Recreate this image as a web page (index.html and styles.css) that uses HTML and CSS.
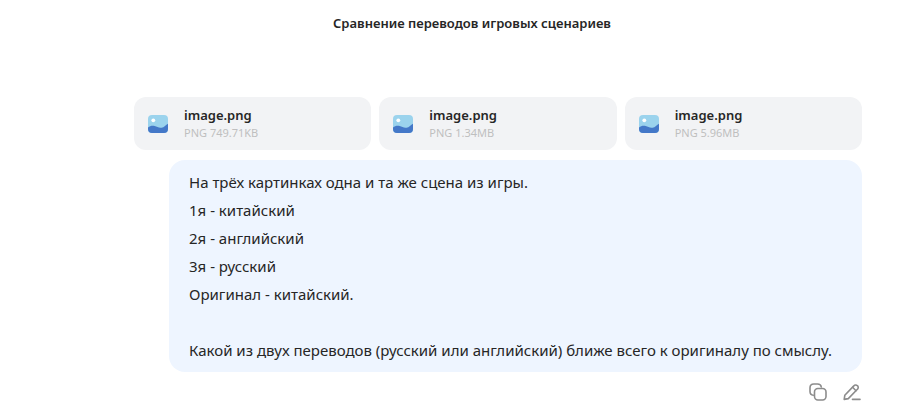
FILE: index.html
```
<!DOCTYPE html>
<html lang="ru">
<head>
    <meta charset="UTF-8">
    <meta name="viewport" content="width=device-width, initial-scale=1.0">
    <title>Сравнение переводов игровых сценариев</title>
    <link rel="stylesheet" href="styles.css">
</head>
<body>
    <svg class="sprite" aria-hidden="true">
        <symbol id="picture" viewBox="0 0 20 18">
            <rect width="20" height="18" rx="4" fill="#9bd3ed"/>
            <circle cx="5.3" cy="5.3" r="1.9" fill="#fff"/>
            <path d="M0 12.4C2 11 4.3 10.3 6.6 11.1C9 12 10.8 13 13.5 12.7C16.3 12.4 17.8 9.7 20 8.7V14A4 4 0 0 1 16 18H4A4 4 0 0 1 0 14Z" fill="#4478c8"/>
        </symbol>
    </svg>
    <header class="header">
        <h1>Сравнение переводов игровых сценариев</h1>
    </header>
    <main class="chat">
        <div class="files">
            <div class="file">
                <svg class="file-icon"><use href="#picture"/></svg>
                <div>
                    <div class="file-name">image.png</div>
                    <div class="file-info">PNG 749.71KB</div>
                </div>
            </div>
            <div class="file">
                <svg class="file-icon"><use href="#picture"/></svg>
                <div>
                    <div class="file-name">image.png</div>
                    <div class="file-info">PNG 1.34MB</div>
                </div>
            </div>
            <div class="file">
                <svg class="file-icon"><use href="#picture"/></svg>
                <div>
                    <div class="file-name">image.png</div>
                    <div class="file-info">PNG 5.96MB</div>
                </div>
            </div>
        </div>
        <div class="message">На трёх картинках одна и та же сцена из игры.
1я - китайский
2я - английский
3я - русский
Оригинал - китайский.

Какой из двух переводов (русский или английский) ближе всего к оригиналу по смыслу.</div>
        <div class="actions">
            <button type="button" aria-label="Копировать">
                <svg viewBox="0 0 18 18">
                    <path d="M4.3 12.2C2.2 12 1 10.7 1 8.5V4.8C1 2.3 2.3 1 4.8 1H8.5C10.7 1 12 2.1 12.3 4"/>
                    <rect x="5.5" y="5.5" width="11.5" height="11.5" rx="3.4"/>
                </svg>
            </button>
            <button type="button" aria-label="Изменить">
                <svg viewBox="0 0 18 18">
                    <path d="M1.2 16.4L1.8 12.3L10.8 2.9A2.4 2.4 0 0 1 14.4 2.7A2.4 2.4 0 0 1 14.4 6.3L5.3 15.6Z"/>
                    <path d="M9.6 4.3L13 7.7M9.5 16.4H17"/>
                </svg>
            </button>
        </div>
    </main>
</body>
</html>
```
FILE: styles.css
```
body { margin: 0; background: #fff; color: #262626; font-family: "Segoe UI", "Noto Sans", sans-serif; }
.sprite { display: none; }
.header { padding: 13px 0 13px 20px; text-align: center; }
.header h1 { margin: 0; font-size: 13px; line-height: 20px; font-weight: 600; }
.chat { display: flex; flex-direction: column; padding: 51px 62px 0 134px; }
.files { display: grid; grid-template-columns: repeat(3, 1fr); gap: 8px; margin-bottom: 10px; }
.file { display: flex; align-items: center; gap: 16px; box-sizing: border-box; padding: 9px 14px 8px; border-radius: 12px; background: #f2f3f5; }
.file-icon { width: 20px; height: 18px; }
.file-name { font-size: 13px; line-height: 18px; font-weight: 600; }
.file-info { font-size: 11px; line-height: 18px; color: #bfbfbf; }
.message { margin-left: 35px; padding: 8px 20px; border-radius: 16px; background: #eef5ff; font-size: 15px; line-height: 28px; white-space: pre-wrap; }
.actions { display: flex; justify-content: flex-end; gap: 16px; padding: 11px 1px 0; }
.actions button { width: 18px; height: 18px; padding: 0; border: 0; background: none; cursor: pointer; }
.actions svg { display: block; width: 18px; height: 18px; fill: none; stroke: #8c8c8c; stroke-width: 1.6; stroke-linecap: round; stroke-linejoin: round; }
```
